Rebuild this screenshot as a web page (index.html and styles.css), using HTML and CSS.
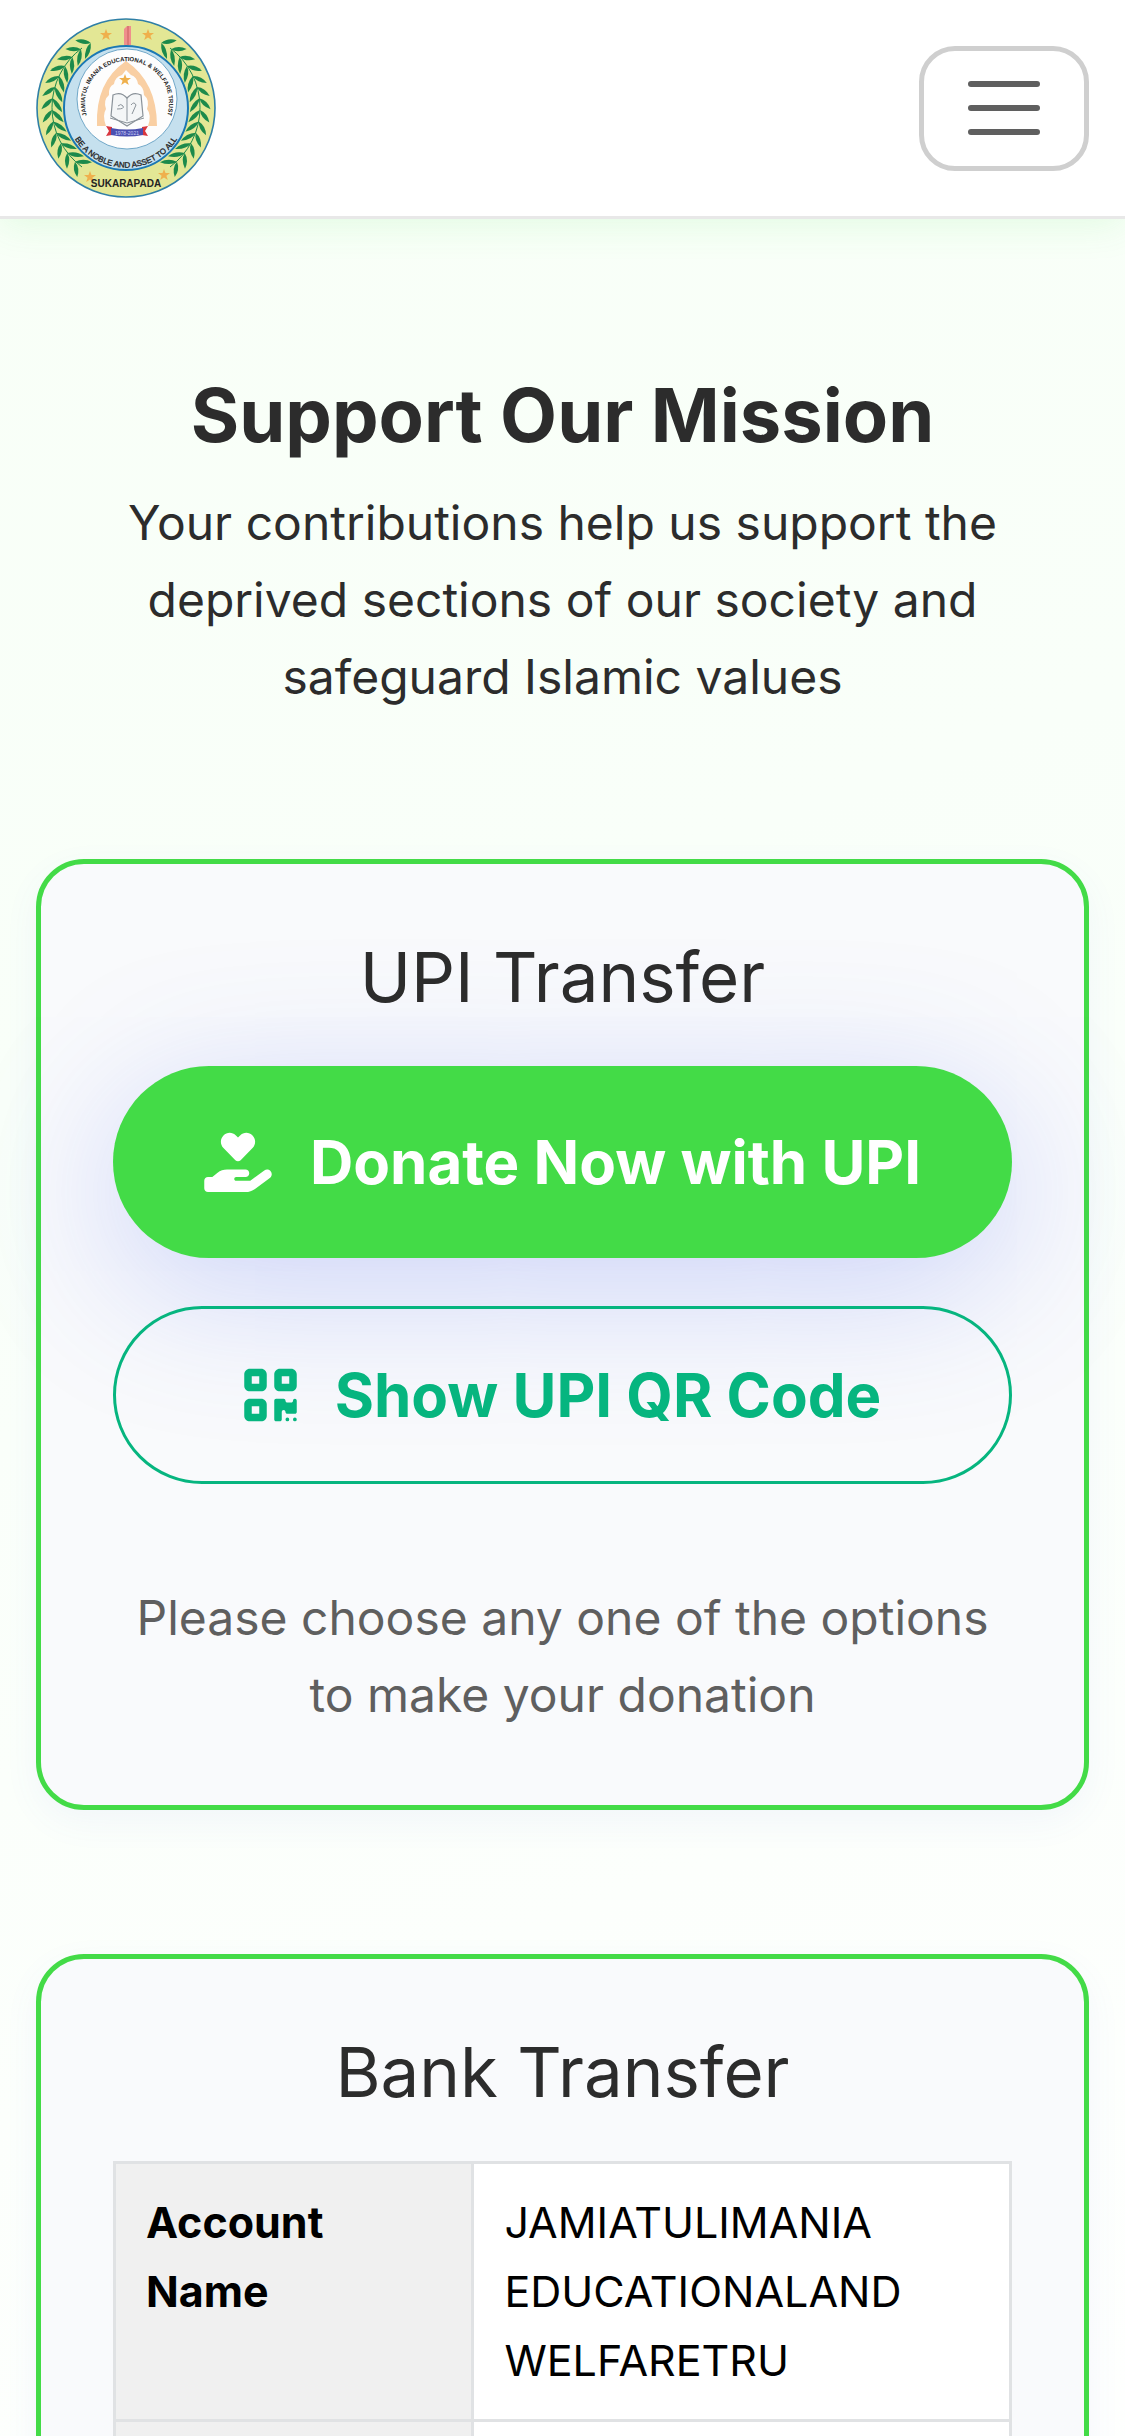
FILE: index.html
```html
<!DOCTYPE html>
<html lang="en">
<head>
    <meta charset="UTF-8">
    <meta name="viewport" content="width=device-width, initial-scale=1.0">
    <title>Support Our Mission</title>
    <link rel="stylesheet" href="styles.css">
</head>
<body>
    <header class="navbar">
        <a href="#" class="brand" aria-label="Home">
            <svg class="logo" viewBox="0 0 180 180">
                <defs>
                    <g id="leaf">
                        <path d="M92 16 Q84 15 80 6 Q89 8 92 16Z"/>
                        <path d="M92 16 Q84 17 79 27 Q88 25 92 16Z"/>
                    </g>
                    <g id="branch" fill="#1c8a4b">
                        <path d="M46 30 A74 74 0 0 0 46 149" fill="none" stroke="#1c8a4b" stroke-width="1"/>
                        <use href="#leaf" transform="rotate(-30 90 90)"/>
                        <use href="#leaf" transform="rotate(-39 90 90)"/>
                        <use href="#leaf" transform="rotate(-48 90 90)"/>
                        <use href="#leaf" transform="rotate(-57 90 90)"/>
                        <use href="#leaf" transform="rotate(-66 90 90)"/>
                        <use href="#leaf" transform="rotate(-75 90 90)"/>
                        <use href="#leaf" transform="rotate(-84 90 90)"/>
                        <use href="#leaf" transform="rotate(-93 90 90)"/>
                        <use href="#leaf" transform="rotate(-102 90 90)"/>
                        <use href="#leaf" transform="rotate(-111 90 90)"/>
                        <use href="#leaf" transform="rotate(-120 90 90)"/>
                        <use href="#leaf" transform="rotate(-129 90 90)"/>
                        <use href="#leaf" transform="rotate(-138 90 90)"/>
                    </g>
                    <path id="star" d="M0 -6 L1.5 -2 L6 -2 L2.4 .8 L3.8 5 L0 2.4 L-3.8 5 L-2.4 .8 L-6 -2 L-1.5 -2Z" fill="#efb04c"/>
                    <path id="arc-top" d="M53 103 A42 42 0 1 1 129 103"/>
                    <path id="arc-bottom" d="M32 105 A60 60 0 0 0 148 105"/>
                </defs>
                <circle cx="90" cy="90" r="89" fill="#e3e795" stroke="#2f7fa6" stroke-width="1.6"/>
                <path d="M88 27V11l3-3h4v19Z" fill="#ef8f8c"/>
                <path d="M92 8v19" stroke="#c9605f" stroke-width="1"/>
                <use href="#branch"/>
                <use href="#branch" transform="matrix(-1 0 0 1 180 0)"/>
                <circle cx="90" cy="90" r="62" fill="#c5e0ee" stroke="#1b78b4" stroke-width="2"/>
                <circle cx="91" cy="81" r="50" fill="#fdfdfd" stroke="#6fa7c8" stroke-width="1"/>
                <path d="M61 108 Q59 64 90 43 Q121 64 121 108 H112 Q116 97 111 91 Q114 82 108 77 Q108 69 102 66 Q101 59 95 57 L90 52 L86 57 Q79 59 78 66 Q72 69 73 77 Q67 82 70 91 Q66 97 70 108Z" fill="#f9cfa3"/>
                <path d="M75 98 L77 77 Q85 73 91 80 Q97 73 105 77 L107 98 L91 108Z" fill="#f4f6f7" stroke="#8a9299" stroke-width="1.2"/>
                <path d="M91 80V103M74 100L91 105L108 100M82 88q3-3 5 0t-6 3M95 87q3-4 5 0l-4 9" fill="none" stroke="#8a9299"/>
                <path d="M70 108l6 1v8l-6 1 3-5ZM112 108l-6 1v8l6 1-3-5Z" fill="#d8353e"/>
                <path d="M75 110q16 3 32 0v7q-16 3-32 0Z" fill="#4a4fb0"/>
                <text class="logo-year" x="91" y="117">1978-2021</text>
                <use href="#star" x="70" y="17"/>
                <use href="#star" x="112" y="17"/>
                <use href="#star" x="89" y="62"/>
                <use href="#star" x="54" y="159"/>
                <use href="#star" x="128" y="157"/>
                <text class="logo-name"><textPath href="#arc-top" startOffset="50%">JAMIATUL IMANIA EDUCATIONAL &amp; WELFARE TRUST</textPath></text>
                <text class="logo-motto"><textPath href="#arc-bottom" startOffset="50%">BE A NOBLE AND ASSET TO ALL</textPath></text>
                <text class="logo-place" x="90" y="169">SUKARAPADA</text>
            </svg>
        </a>
        <button type="button" class="menu-toggle" aria-label="Toggle navigation">
            <svg viewBox="0 0 30 30">
                <path d="M4 7h22M4 15h22M4 23h22" stroke="#5f5f5f" stroke-width="2" stroke-linecap="round"/>
            </svg>
        </button>
    </header>

    <main class="container">
        <section class="intro">
            <h1>Support Our Mission</h1>
            <p>Your contributions help us support the deprived sections of our society and safeguard Islamic values</p>
        </section>

        <section class="card">
            <h2>UPI Transfer</h2>
            <a href="#" class="btn btn-donate">
                <svg class="icon-heart" viewBox="0 0 576 512" fill="currentColor">
                    <path d="M163.9 136.9c-29.4-29.8-29.4-78.2 0-108s77-29.8 106.4 0l17.7 18 17.7-18c29.4-29.8 77-29.8 106.4 0s29.4 78.2 0 108L310.5 240.1c-6.2 6.3-14.3 9.4-22.5 9.4s-16.3-3.1-22.5-9.4L163.9 136.9zM568.2 336.3c13.1 17.8 9.3 42.8-8.5 55.9L433.1 485.5c-23.4 17.2-51.6 26.5-80.7 26.5H32c-17.7 0-32-14.3-32-32V416c0-17.7 14.3-32 32-32H68.8l44.9-36c22.7-18.2 50.9-28 80-28H352c17.7 0 32 14.3 32 32s-14.3 32-32 32H272c-8.8 0-16 7.2-16 16s7.2 16 16 16H392.6l119.7-88.2c17.8-13.1 42.8-9.3 55.9 8.5z"/>
                </svg>
                Donate Now with UPI
            </a>
            <button type="button" class="btn btn-qr">
                <svg class="icon-qr" viewBox="0 0 448 512" fill="currentColor">
                    <path d="M0 80C0 53.5 21.5 32 48 32h96c26.5 0 48 21.5 48 48v96c0 26.5-21.5 48-48 48H48c-26.5 0-48-21.5-48-48V80zM64 96v64h64V96H64zM0 336c0-26.5 21.5-48 48-48h96c26.5 0 48 21.5 48 48v96c0 26.5-21.5 48-48 48H48c-26.5 0-48-21.5-48-48V336zm64 16v64h64V352H64zM304 32h96c26.5 0 48 21.5 48 48v96c0 26.5-21.5 48-48 48H304c-26.5 0-48-21.5-48-48V80c0-26.5 21.5-48 48-48zm80 64H320v64h64V96zM256 304c0-8.8 7.2-16 16-16h64c8.8 0 16 7.2 16 16s7.2 16 16 16h32c8.8 0 16-7.2 16-16s7.2-16 16-16s16 7.2 16 16v96c0 8.8-7.2 16-16 16H368c-8.8 0-16-7.2-16-16s-7.2-16-16-16s-16 7.2-16 16v64c0 8.8-7.2 16-16 16H272c-8.8 0-16-7.2-16-16V304zM368 480a16 16 0 1 1 0-32 16 16 0 1 1 0 32zm64 0a16 16 0 1 1 0-32 16 16 0 1 1 0 32z"/>
                </svg>
                Show UPI QR Code
            </button>
            <p class="note">Please choose any one of the options to make your donation</p>
        </section>

        <section class="card">
            <h2>Bank Transfer</h2>
            <table class="bank-table">
                <tr>
                    <th scope="row">Account Name</th>
                    <td>JAMIATULIMANIA EDUCATIONALAND WELFARETRU</td>
                </tr>
                <tr>
                    <th scope="row"></th>
                    <td></td>
                </tr>
            </table>
        </section>
    </main>
</body>
</html>
```
FILE: styles.css
```css
* {
    box-sizing: border-box;
}
body {
    min-height: 100vh;
    margin: 0;
    font-family: Inter, "Liberation Sans", sans-serif;
    font-size: 48px;
    line-height: 77px;
    color: #2c2c2c;
    background: linear-gradient(160deg, #f8fff7 0%, #f9fff9 35%, #ffffff 100%);
}
.navbar {
    display: flex;
    justify-content: space-between;
    align-items: center;
    padding: 18px 36px;
    background-color: #fff;
    border-bottom: 3px solid #e8e8e8;
    box-shadow: 0 6px 36px rgba(67, 219, 71, 0.12);
}
.brand {
    display: block;
}
.logo {
    display: block;
    width: 180px;
    height: 180px;
}
.logo text {
    font-family: "Liberation Sans", Arial, sans-serif;
    text-anchor: middle;
    fill: #222;
}
.logo .logo-name {
    font-size: 6px;
    font-weight: bold;
}
.logo .logo-motto {
    font-size: 8px;
    stroke: #222;
    stroke-width: 0.3;
}
.logo .logo-place {
    font-size: 10px;
    font-weight: bold;
}
.logo .logo-year {
    font-size: 5px;
    fill: #c9cdf5;
}
.menu-toggle {
    display: flex;
    align-items: center;
    justify-content: center;
    width: 170px;
    height: 125px;
    padding: 0;
    background: none;
    border: 5px solid #cfcfcf;
    border-radius: 36px;
    cursor: pointer;
}
.menu-toggle svg {
    width: 96px;
    height: 90px;
}
.container {
    padding: 0 36px;
}
.intro {
    padding: 144px 72px;
    text-align: center;
}
.intro h1 {
    margin: 0 0 16px;
    font-size: 74px;
    font-weight: 700;
    line-height: 105px;
}
.intro p {
    margin: 0;
}
.card {
    margin-bottom: 144px;
    padding: 72px;
    text-align: center;
    background-color: #f9fafc;
    border: 5px solid #43db47;
    border-radius: 48px;
    box-shadow: 0 12px 36px rgba(80, 100, 220, 0.06);
}
.card h2 {
    margin: 0 0 48px;
    font-size: 69px;
    font-weight: 400;
    line-height: 82px;
}
.btn {
    display: flex;
    align-items: center;
    justify-content: center;
    gap: 38px;
    width: 100%;
    font-family: inherit;
    font-size: 60px;
    font-weight: 700;
    line-height: 90px;
    text-decoration: none;
    border-radius: 96px;
    cursor: pointer;
}
.btn-donate {
    margin-bottom: 48px;
    padding: 51px 48px;
    color: #fff;
    background-color: #43db47;
    box-shadow: 0 30px 150px rgba(67, 97, 238, 0.25);
}
.btn-qr {
    padding: 41px 48px;
    color: #06b57f;
    background: none;
    border: 3px solid #06b57f;
}
.icon-heart {
    width: 68px;
    height: 60px;
}
.icon-qr {
    width: 53px;
    height: 60px;
}
.note {
    margin: 95px 0 0;
    color: #5f5f5f;
}
.bank-table {
    width: 100%;
    border-collapse: collapse;
    font-size: 43px;
    line-height: 69px;
    text-align: left;
    color: #000;
}
.bank-table th,
.bank-table td {
    height: 96px;
    padding: 24px 30px;
    vertical-align: top;
    border: 3px solid #e0e2e4;
}
.bank-table th {
    width: 40%;
    font-weight: 700;
    background-color: #f0f0f0;
}
.bank-table td {
    background-color: #fff;
}
```
